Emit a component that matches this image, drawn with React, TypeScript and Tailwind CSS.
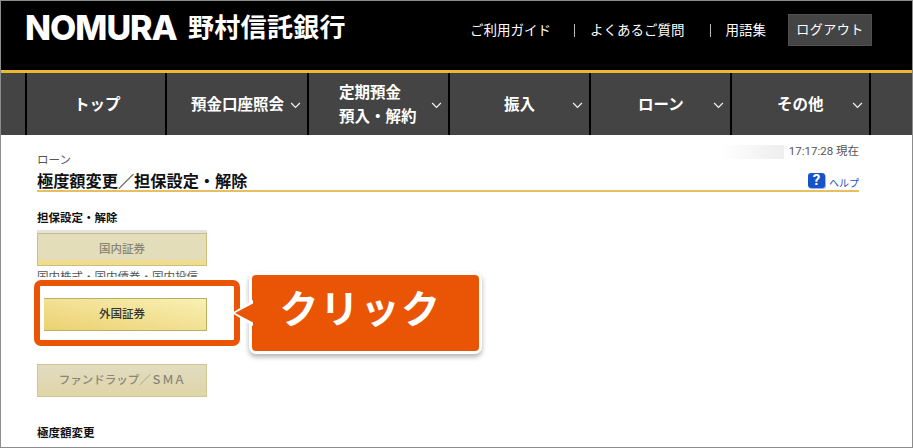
const JP = "font-['Roboto','Noto_Sans_CJK_JP',sans-serif]";

const navItems = [
  { label: ["トップ"], width: "w-[140px]", pad: "pl-[47px]", chevron: false },
  { label: ["預金口座照会"], width: "w-[142px]", pad: "pl-[24px]", chevron: true },
  { label: ["定期預金", "預入・解約"], width: "w-[141px]", pad: "pl-[30px]", chevron: true },
  { label: ["振入"], width: "w-[141px]", pad: "pl-[54px]", chevron: true },
  { label: ["ローン"], width: "w-[141px]", pad: "pl-[47px]", chevron: true },
  { label: ["その他"], width: "w-[139px]", pad: "pl-[45px]", chevron: true },
];

function Chevron() {
  return (
    <svg viewBox="0 0 12 8" className="ml-auto mr-[6px] w-[11px] h-[7px] flex-none" aria-hidden>
      <path d="M1 1.2 L6 6.2 L11 1.2" fill="none" stroke="#f2f2f2" strokeWidth="1.4" />
    </svg>
  );
}

function Logo() {
  return (
    <div className="flex items-center pl-[24px] h-[54px] text-white">
      <span className="font-['Inter',sans-serif] font-extrabold text-[34px] leading-none tracking-[-1px] w-[163px] whitespace-nowrap">
        NOMURA
      </span>
      <span className={`${JP} font-bold text-[26px] leading-none tracking-[0.3px] whitespace-nowrap`}>
        野村信託銀行
      </span>
    </div>
  );
}

function TopLinks() {
  return (
    <div className="flex items-center ml-auto mr-[40px] mt-[13px] h-[32px] text-[13px] text-white">
      <span className="text-[13.5px] whitespace-nowrap">ご利用ガイド</span>
      <span className="w-px h-[13px] bg-[#bbb] ml-[23px] mr-[15px]" />
      <span className="text-[13.5px] whitespace-nowrap">よくあるご質問</span>
      <span className="w-px h-[13px] bg-[#bbb] ml-[25px] mr-[15px]" />
      <span className="text-[13.5px] whitespace-nowrap">用語集</span>
      <div className="ml-[22px] w-[84px] h-[32px] flex items-center justify-center bg-[#444] border border-[#505050] tracking-[0.5px]">
        ログアウト
      </div>
    </div>
  );
}

function ActionButton({
  label,
  enabled = false,
  stripe = false,
}: {
  label: string;
  enabled?: boolean;
  stripe?: boolean;
}) {
  return (
    <div
      className={`relative w-[170px] h-[33px] flex items-center justify-center border text-[11.5px] font-medium ${
        enabled
          ? "border-[#bcae62] bg-gradient-to-tr from-[#ebd06f] to-[#f9f0b4] text-[#333]"
          : stripe
            ? "border-[#cbbf7d] bg-[#e3ddb9] text-[#8a8577]"
            : "border-[#cfc691] bg-gradient-to-b from-[#e2dcc0] to-[#dfd5a8] text-[#8a8577]"
      }`}
    >
      {label}
      {stripe && <span className="absolute left-0 right-0 bottom-0 h-[5px] bg-[#efdc8c]" />}
    </div>
  );
}

function Callout() {
  return (
    <div className="absolute left-[231px] top-[271px] w-[251px] h-[82px]">
      <div className="absolute left-[17px] top-0 w-[233px] h-[82px] pr-[10px] pb-[6px] bg-[#e95504] border-[3px] border-white rounded-[7px] shadow-[0_3px_5px_rgba(0,0,0,0.3)] flex items-center justify-center text-white text-[39px] font-bold tracking-[1.5px]">
        クリック
      </div>
      <svg viewBox="0 0 24 30" className="absolute left-0 top-[24px] w-[24px] h-[30px]" aria-hidden>
        <polygon points="0,17 21,4 21,30" fill="#fff" />
        <polygon points="3,17 22,7 22,27" fill="#e95504" />
      </svg>
    </div>
  );
}

export default function App() {
  return (
    <div className={`${JP} relative w-[913px] h-[448px] overflow-hidden bg-white border border-[#8c8c8c] box-border`}>
      <header className="flex h-[69px] bg-black">
        <Logo />
        <TopLinks />
      </header>
      <div className="h-[3px] bg-[#eab92f]" />
      <nav className="flex h-[62px] bg-[#444] pl-[24px] text-white font-bold text-[15.5px]">
        {navItems.map((item) => (
          <div key={item.label[0]} className={`${item.width} ${item.pad} pt-[2px] flex items-center border-l-2 border-black`}>
            <div className="whitespace-nowrap leading-[24px]">
              {item.label.map((line) => (
                <div key={line}>{line}</div>
              ))}
            </div>
            {item.chevron && <Chevron />}
          </div>
        ))}
        <div className="flex-1 border-l-2 border-black" />
      </nav>

      <main className="pl-[36px] pr-[53px]">
        <div className="flex items-start h-[21px] mt-[10px]">
          <div className="mt-[9px] text-[11.5px] leading-[12px] text-[#555]">ローン</div>
          <div className="ml-auto flex items-center h-[14px] gap-[5px] text-[11.5px] leading-none text-[#555]">
            <span className="w-[64px] h-[14px] bg-gradient-to-r from-white to-[#eeeeee]" />
            <span>17:17:28 現在</span>
          </div>
        </div>
        <div className="mt-[6px] flex items-end border-b-2 border-[#e6bf62] h-[20px]">
          <h1 className="-mb-[1px] text-[16.2px] leading-[18px] font-bold text-[#111] whitespace-nowrap">
            極度額変更／担保設定・解除
          </h1>
          <div className="ml-auto flex items-end gap-[4px]">
            <div className="mb-[2px] w-[17px] h-[15px] rounded-[3px] bg-[#1652c8] shadow-[1px_1px_0_#9db5e6] flex items-center justify-center text-white text-[15px] font-bold leading-none">
              ?
            </div>
            <span className="text-[10px] leading-[12px] text-[#1c4fc0]">ヘルプ</span>
          </div>
        </div>

        <div className="mt-[19px] text-[11.5px] leading-[14px] font-bold text-[#111]">担保設定・解除</div>
        <div className="mt-[5px] w-[170px] h-[3px] bg-[#e2e2e2]" />
        <ActionButton label="国内証券" stripe />
        <div className="mt-[4px] h-[7px] overflow-hidden text-[11.5px] leading-[14px] text-[#555] whitespace-nowrap">
          国内株式・国内債券・国内投信
        </div>
        <div className="mt-[21px]">
          <ActionButton label="外国証券" enabled />
        </div>
        <div className="mt-[33px]">
          <ActionButton label="ファンドラップ／ＳＭＡ" />
        </div>
        <div className="mt-[29px] text-[11.5px] leading-[14px] font-bold text-[#111]">極度額変更</div>
      </main>

      <div className="absolute left-[33px] top-[279px] w-[206px] h-[66px] border-[6px] border-[#e95504] rounded-[7px]">
        <div className="w-[4px] h-full bg-white" />
      </div>
      <Callout />
    </div>
  );
}
